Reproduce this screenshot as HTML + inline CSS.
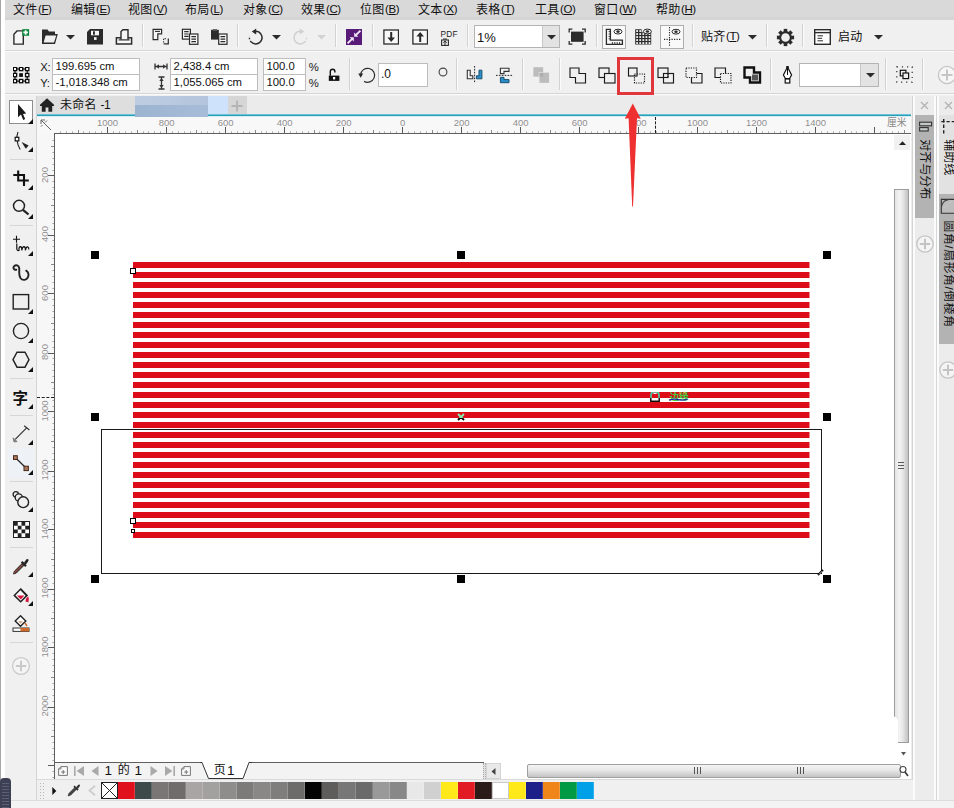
<!DOCTYPE html>
<html><head><meta charset="utf-8"><title>CorelDRAW</title>
<style>
html,body{margin:0;padding:0;}
body{width:954px;height:808px;overflow:hidden;background:#f0f0f0;font-family:"Liberation Sans","Noto Sans CJK SC",sans-serif;}
#r{position:relative;width:954px;height:808px;overflow:hidden;}
#r div,#r span,#r svg{position:absolute;display:block;}
#r span{white-space:nowrap;line-height:1;}
#r div{box-sizing:border-box;}
#r span.cj{font-family:"Liberation Sans","Noto Sans CJK SC",sans-serif;}
</style></head><body><div id="r">
<div style="left:0px;top:0px;width:954px;height:808px;background:#f0f0f0;"></div>
<div style="left:0px;top:0px;width:954px;height:20px;background:#d9d9d9;"></div>
<div style="left:0px;top:17px;width:954px;height:3px;background:#d4d4d4;"></div>
<span class="cj" style="left:13px;top:4px;font-size:12px;color:#111;letter-spacing:0.3px">文件</span>
<span style="left:38.0px;top:4px;font-size:11.5px;color:#111;letter-spacing:-0.4px">(<u>F</u>)</span>
<span class="cj" style="left:71px;top:4px;font-size:12px;color:#111;letter-spacing:0.3px">编辑</span>
<span style="left:96.0px;top:4px;font-size:11.5px;color:#111;letter-spacing:-0.4px">(<u>E</u>)</span>
<span class="cj" style="left:128px;top:4px;font-size:12px;color:#111;letter-spacing:0.3px">视图</span>
<span style="left:153.0px;top:4px;font-size:11.5px;color:#111;letter-spacing:-0.4px">(<u>V</u>)</span>
<span class="cj" style="left:185px;top:4px;font-size:12px;color:#111;letter-spacing:0.3px">布局</span>
<span style="left:210.0px;top:4px;font-size:11.5px;color:#111;letter-spacing:-0.4px">(<u>L</u>)</span>
<span class="cj" style="left:243px;top:4px;font-size:12px;color:#111;letter-spacing:0.3px">对象</span>
<span style="left:268.0px;top:4px;font-size:11.5px;color:#111;letter-spacing:-0.4px">(<u>C</u>)</span>
<span class="cj" style="left:301px;top:4px;font-size:12px;color:#111;letter-spacing:0.3px">效果</span>
<span style="left:326.0px;top:4px;font-size:11.5px;color:#111;letter-spacing:-0.4px">(<u>C</u>)</span>
<span class="cj" style="left:360px;top:4px;font-size:12px;color:#111;letter-spacing:0.3px">位图</span>
<span style="left:385.0px;top:4px;font-size:11.5px;color:#111;letter-spacing:-0.4px">(<u>B</u>)</span>
<span class="cj" style="left:418px;top:4px;font-size:12px;color:#111;letter-spacing:0.3px">文本</span>
<span style="left:443.0px;top:4px;font-size:11.5px;color:#111;letter-spacing:-0.4px">(<u>X</u>)</span>
<span class="cj" style="left:476px;top:4px;font-size:12px;color:#111;letter-spacing:0.3px">表格</span>
<span style="left:501.0px;top:4px;font-size:11.5px;color:#111;letter-spacing:-0.4px">(<u>T</u>)</span>
<span class="cj" style="left:535px;top:4px;font-size:12px;color:#111;letter-spacing:0.3px">工具</span>
<span style="left:560.0px;top:4px;font-size:11.5px;color:#111;letter-spacing:-0.4px">(<u>O</u>)</span>
<span class="cj" style="left:594px;top:4px;font-size:12px;color:#111;letter-spacing:0.3px">窗口</span>
<span style="left:619.0px;top:4px;font-size:11.5px;color:#111;letter-spacing:-0.4px">(<u>W</u>)</span>
<span class="cj" style="left:656px;top:4px;font-size:12px;color:#111;letter-spacing:0.3px">帮助</span>
<span style="left:681.0px;top:4px;font-size:11.5px;color:#111;letter-spacing:-0.4px">(<u>H</u>)</span>
<div style="left:5px;top:50px;width:949px;height:1px;background:#d6d6d6;"></div>
<div style="left:5px;top:51px;width:949px;height:1px;background:#fafafa;"></div>
<div style="left:5px;top:93px;width:949px;height:1px;background:#d6d6d6;"></div>
<div style="left:5px;top:94px;width:949px;height:1px;background:#fafafa;"></div>
<svg style="left:12px;top:28px;" width="19" height="18" viewBox="0 0 19 18"><path d="M5 2.9 H11.3 V16.1 H1.9 V6.2 Z" fill="#f7f7f7" stroke="#2b2b2b" stroke-width="1.4" stroke-linejoin="miter"/><rect x="10.2" y="1.1" width="6.9" height="6.7" fill="#10893e"/><path d="M13.65 2.2 V6.7 M11.4 4.45 H15.9" stroke="#fff" stroke-width="1.7"/></svg>
<svg style="left:41px;top:28px;" width="18" height="17" viewBox="0 0 18 17"><path d="M1 1.5 H6.5 L8 3.5 H14 V6 H16.8 L14 16 H1 Z" fill="#2b2b2b"/><path d="M4.6 7.5 H15.2 L13 14.6 H2.6 Z" fill="#f0f0f0"/></svg>
<svg style="left:66px;top:34.5px;" width="9" height="5" viewBox="0 0 9 5"><path d="M0 0 H9 L4.5 4.6 Z" fill="#2b2b2b"/></svg>
<svg style="left:87px;top:29px;" width="16" height="16" viewBox="0 0 16 16"><path d="M3 0 H16 V15.6 H0 V3 Z" fill="#2b2b2b"/><rect x="4" y="1.8" width="8" height="4.5" fill="#f6f6f6"/><rect x="6" y="2.3" width="1.9" height="3.4" fill="#2b2b2b"/><rect x="7" y="8.2" width="2.6" height="2.7" fill="#f6f6f6"/></svg>
<svg style="left:115px;top:29px;" width="18" height="16" viewBox="0 0 18 16"><rect x="1.4" y="8.8" width="15.2" height="6.2" fill="#f8f8f8" stroke="#2b2b2b" stroke-width="1.5"/><path d="M6 10.6 V2.6 L8 0.7 H13 V10.6" fill="#f6f6f6" stroke="#2b2b2b" stroke-width="1.4"/><path d="M3.6 10.9 H14.6" stroke="#2b2b2b" stroke-width="1.2"/></svg>
<div style="left:142px;top:24px;width:1px;height:23px;background:#d2d2d2;"></div>
<div style="left:143px;top:24px;width:1px;height:23px;background:#fbfbfb;"></div>
<svg style="left:152px;top:28px;" width="18" height="18" viewBox="0 0 18 18"><path d="M1.1 1.3 H9.6 V5.9 H5.8 V11.6 H1.1 Z" fill="#f7f7f7" stroke="#2b2b2b" stroke-width="1.2"/><path d="M3 3.4 H8" stroke="#2b2b2b" stroke-width="1.1"/><path d="M16.3 10.6 V15.9 H11.6" fill="none" stroke="#2b2b2b" stroke-width="1.2"/><path d="M11.6 14.4 V10.6 H15" fill="none" stroke="#2b2b2b" stroke-width="1.1" stroke-dasharray="1.2 1.2"/></svg>
<svg style="left:181px;top:28px;" width="18" height="18" viewBox="0 0 18 18"><rect x="1.4" y="1.3" width="8" height="9.8" fill="#f7f7f7" stroke="#2b2b2b" stroke-width="1.2"/><path d="M3.2 3.6 H7.6 M3.2 6 H7.6 M3.2 8.4 H7.6" stroke="#2b2b2b" stroke-width="1.1"/><rect x="8.5" y="6" width="8.4" height="10.3" fill="#f7f7f7" stroke="#2b2b2b" stroke-width="1.2"/><path d="M10.4 8.6 H15 M10.4 11.1 H15 M10.4 13.6 H15" stroke="#2b2b2b" stroke-width="1.1"/></svg>
<svg style="left:210px;top:28px;" width="19" height="18" viewBox="0 0 19 18"><rect x="1" y="1.8" width="7.8" height="9.8" fill="#2b2b2b"/><rect x="2.8" y="1" width="4.2" height="1.7" fill="#6a6a6a"/><rect x="8.7" y="6" width="8.3" height="10.3" fill="#f7f7f7" stroke="#2b2b2b" stroke-width="1.2"/><path d="M10.5 8.6 H15.2 M10.5 11.1 H15.2 M10.5 13.6 H15.2" stroke="#2b2b2b" stroke-width="1.1"/></svg>
<div style="left:237px;top:24px;width:1px;height:23px;background:#d2d2d2;"></div>
<div style="left:238px;top:24px;width:1px;height:23px;background:#fbfbfb;"></div>
<svg style="left:247px;top:28px;" width="17" height="18" viewBox="0 0 17 18"><path d="M8.7 3.3 A6.3 6.3 0 1 1 4.25 14.05" fill="none" stroke="#2b2b2b" stroke-width="1.5"/><path d="M4.25 14.05 A6.3 6.3 0 0 1 2.6 8" fill="none" stroke="#2b2b2b" stroke-width="1.4" stroke-dasharray="1.5 1.7"/><path d="M9.2 0.5 L4.8 3.6 L9.2 6.6 Z" fill="#2b2b2b"/></svg>
<svg style="left:272px;top:34.5px;" width="9" height="5" viewBox="0 0 9 5"><path d="M0 0 H9 L4.5 4.6 Z" fill="#2b2b2b"/></svg>
<svg style="left:292px;top:28px;" width="17" height="18" viewBox="0 0 17 18"><path d="M8.3 3.3 A6.3 6.3 0 1 0 12.75 14.05" fill="none" stroke="#d0d0d0" stroke-width="1.5"/><path d="M12.75 14.05 A6.3 6.3 0 0 0 14.4 8" fill="none" stroke="#d0d0d0" stroke-width="1.4" stroke-dasharray="1.5 1.7"/><path d="M7.8 0.5 L12.2 3.6 L7.8 6.6 Z" fill="#d0d0d0"/></svg>
<svg style="left:317px;top:34.5px;" width="9" height="5" viewBox="0 0 9 5"><path d="M0 0 H9 L4.5 4.6 Z" fill="#d2d2d2"/></svg>
<div style="left:335px;top:24px;width:1px;height:23px;background:#d2d2d2;"></div>
<div style="left:336px;top:24px;width:1px;height:23px;background:#fbfbfb;"></div>
<svg style="left:346px;top:29px;" width="16" height="16" viewBox="0 0 16 16"><rect width="16" height="16" fill="#581c78"/><path d="M14.4 1.6 L9.6 6.4" stroke="#efe6f6" stroke-width="2"/><path d="M8.2 3.6 V7.8 H12.4 Z" fill="#efe6f6"/><path d="M1.6 14.4 L6.4 9.6" stroke="#efe6f6" stroke-width="2"/><path d="M7.8 12.4 V8.2 H3.6 Z" fill="#efe6f6"/></svg>
<div style="left:372px;top:24px;width:1px;height:23px;background:#d2d2d2;"></div>
<div style="left:373px;top:24px;width:1px;height:23px;background:#fbfbfb;"></div>
<svg style="left:383px;top:29px;" width="16" height="16" viewBox="0 0 16 16"><rect x="0.9" y="1" width="14.6" height="14" fill="#f8f8f8" stroke="#2b2b2b" stroke-width="1.3"/><path d="M8.2 3 V10" stroke="#2b2b2b" stroke-width="2"/><path d="M4.4 8.4 L8.2 13 L12 8.4 Z" fill="#2b2b2b"/></svg>
<svg style="left:412px;top:29px;" width="16" height="16" viewBox="0 0 16 16"><rect x="0.9" y="1" width="14.6" height="14" fill="#f8f8f8" stroke="#2b2b2b" stroke-width="1.3"/><path d="M8.2 13 V6" stroke="#2b2b2b" stroke-width="2"/><path d="M4.4 7.6 L8.2 3 L12 7.6 Z" fill="#2b2b2b"/></svg>
<span style="left:440.5px;top:29.5px;font-size:8.3px;color:#222;letter-spacing:0.2px">PDF</span>
<svg style="left:441px;top:38px;" width="8" height="8" viewBox="0 0 8 8"><rect x="0.6" y="2" width="6.8" height="5.4" fill="none" stroke="#2b2b2b" stroke-width="1.1"/><path d="M4 7 V3 M2.3 4.8 L4 3 L5.7 4.8" stroke="#2b2b2b" stroke-width="1" fill="none"/><path d="M2 1 H6" stroke="#2b2b2b" stroke-width="1"/></svg>
<div style="left:467px;top:24px;width:1px;height:23px;background:#d2d2d2;"></div>
<div style="left:468px;top:24px;width:1px;height:23px;background:#fbfbfb;"></div>
<div style="left:474px;top:25px;width:86px;height:23px;background:#fff;border:1px solid #b4b4b4;"></div>
<div style="left:542px;top:26px;width:17px;height:21px;background:#e3e3e3;border-left:1px solid #c8c8c8;"></div>
<span style="left:477px;top:30.5px;font-size:13px;color:#111;">1%</span>
<svg style="left:546.5px;top:35px;" width="9" height="5" viewBox="0 0 9 5"><path d="M0 0 H9 L4.5 4.6 Z" fill="#2b2b2b"/></svg>
<svg style="left:568px;top:28px;" width="19" height="18" viewBox="0 0 19 18"><rect x="3" y="3.6" width="12.6" height="10.2" fill="#2b2b2b"/><path d="M1.2 4.4 V1.2 H4.4 M14 1.2 H17.2 V4.4 M17.2 13 V16.2 H14 M4.4 16.2 H1.2 V13" fill="none" stroke="#2b2b2b" stroke-width="1.3"/></svg>
<div style="left:596px;top:24px;width:1px;height:23px;background:#d2d2d2;"></div>
<div style="left:597px;top:24px;width:1px;height:23px;background:#fbfbfb;"></div>
<div style="left:602px;top:25px;width:24px;height:24px;background:#f9f9f9;border:1px solid #adadad;"></div>
<svg style="left:605px;top:28px;" width="19" height="18" viewBox="0 0 19 18"><path d="M1.4 1.4 H5.4 V12.2 H17.4 V16.3 H1.4 Z" fill="#f9f9f9" stroke="#2b2b2b" stroke-width="1.3"/><path d="M3.6 3.6 H5 M3.6 6 H5 M3.6 8.4 H5 M3.6 10.8 H5 M7.4 14 V16 M9.8 14 V16 M12.2 14 V16 M14.6 14 V16" stroke="#2b2b2b" stroke-width="0.9"/><ellipse cx="13" cy="3.6" rx="4" ry="2.4" fill="#f9f9f9" stroke="#2b2b2b" stroke-width="1"/><ellipse cx="13" cy="3.6" rx="1.7" ry="1.3" fill="#2b2b2b"/></svg>
<svg style="left:634px;top:28px;" width="19" height="18" viewBox="0 0 19 18"><path d="M1.2 1.2 H7.6 V4.2 H17.2 V16.4 H1.2 Z" fill="#2b2b2b"/><rect x="2.2" y="2.2" width="1.8" height="1.7" fill="#fff"/><rect x="5.3" y="2.2" width="1.8" height="1.7" fill="#fff"/><rect x="2.2" y="5.2" width="1.8" height="1.7" fill="#fff"/><rect x="5.3" y="5.2" width="1.8" height="1.7" fill="#fff"/><rect x="8.4" y="5.2" width="1.8" height="1.7" fill="#fff"/><rect x="11.5" y="5.2" width="1.8" height="1.7" fill="#fff"/><rect x="14.6" y="5.2" width="1.8" height="1.7" fill="#fff"/><rect x="2.2" y="8.2" width="1.8" height="1.7" fill="#fff"/><rect x="5.3" y="8.2" width="1.8" height="1.7" fill="#fff"/><rect x="8.4" y="8.2" width="1.8" height="1.7" fill="#fff"/><rect x="11.5" y="8.2" width="1.8" height="1.7" fill="#fff"/><rect x="14.6" y="8.2" width="1.8" height="1.7" fill="#fff"/><rect x="2.2" y="11.2" width="1.8" height="1.7" fill="#fff"/><rect x="5.3" y="11.2" width="1.8" height="1.7" fill="#fff"/><rect x="8.4" y="11.2" width="1.8" height="1.7" fill="#fff"/><rect x="11.5" y="11.2" width="1.8" height="1.7" fill="#fff"/><rect x="14.6" y="11.2" width="1.8" height="1.7" fill="#fff"/><rect x="2.2" y="14.2" width="1.8" height="1.7" fill="#fff"/><rect x="5.3" y="14.2" width="1.8" height="1.7" fill="#fff"/><rect x="8.4" y="14.2" width="1.8" height="1.7" fill="#fff"/><rect x="11.5" y="14.2" width="1.8" height="1.7" fill="#fff"/><rect x="14.6" y="14.2" width="1.8" height="1.7" fill="#fff"/><ellipse cx="13.4" cy="3.5" rx="4" ry="2.4" fill="#f0f0f0" stroke="#2b2b2b" stroke-width="1"/><ellipse cx="13.4" cy="3.5" rx="1.7" ry="1.3" fill="#2b2b2b"/></svg>
<div style="left:660px;top:25px;width:24px;height:24px;background:#f9f9f9;border:1px solid #adadad;"></div>
<svg style="left:663px;top:26px;" width="19" height="21" viewBox="0 0 19 21"><path d="M6.5 1 V21" stroke="#2b2b2b" stroke-width="1.1" stroke-dasharray="1.2 1.3"/><path d="M1 13.4 H17.5" stroke="#2b2b2b" stroke-width="1.1" stroke-dasharray="1.2 1.3"/><ellipse cx="13" cy="5.7" rx="4" ry="2.4" fill="#f9f9f9" stroke="#2b2b2b" stroke-width="1"/><ellipse cx="13" cy="5.7" rx="1.7" ry="1.3" fill="#2b2b2b"/></svg>
<div style="left:692px;top:24px;width:1px;height:23px;background:#d2d2d2;"></div>
<div style="left:693px;top:24px;width:1px;height:23px;background:#fbfbfb;"></div>
<span class="cj" style="left:701px;top:31px;font-size:12px;color:#111;letter-spacing:0.3px">贴齐</span>
<span style="left:726.0px;top:31px;font-size:11.5px;color:#111;letter-spacing:-0.4px">(<u>T</u>)</span>
<svg style="left:748px;top:35px;" width="9" height="5" viewBox="0 0 9 5"><path d="M0 0 H9 L4.5 4.6 Z" fill="#2b2b2b"/></svg>
<div style="left:766px;top:24px;width:1px;height:23px;background:#d2d2d2;"></div>
<div style="left:767px;top:24px;width:1px;height:23px;background:#fbfbfb;"></div>
<svg style="left:776px;top:28px;" width="19" height="19" viewBox="0 0 19 19"><g transform="translate(9.5 9.5)"><g fill="#2b2b2b"><rect x="-1.8" y="-8.6" width="3.6" height="4" transform="rotate(0)"/><rect x="-1.8" y="-8.6" width="3.6" height="4" transform="rotate(45)"/><rect x="-1.8" y="-8.6" width="3.6" height="4" transform="rotate(90)"/><rect x="-1.8" y="-8.6" width="3.6" height="4" transform="rotate(135)"/><rect x="-1.8" y="-8.6" width="3.6" height="4" transform="rotate(180)"/><rect x="-1.8" y="-8.6" width="3.6" height="4" transform="rotate(225)"/><rect x="-1.8" y="-8.6" width="3.6" height="4" transform="rotate(270)"/><rect x="-1.8" y="-8.6" width="3.6" height="4" transform="rotate(315)"/></g><circle r="6.4" fill="#2b2b2b"/><circle r="4.3" fill="#f0f0f0"/></g></svg>
<div style="left:802px;top:24px;width:1px;height:23px;background:#d2d2d2;"></div>
<div style="left:803px;top:24px;width:1px;height:23px;background:#fbfbfb;"></div>
<svg style="left:814px;top:29px;" width="17" height="16" viewBox="0 0 17 16"><rect x="0.7" y="0.7" width="15.6" height="14.6" fill="#fff" stroke="#2b2b2b" stroke-width="1.4"/><path d="M1 3.6 H16" stroke="#2b2b2b" stroke-width="1.4"/><path d="M3.5 6.8 H9 M3.5 9.3 H8 M3.5 11.8 H9" stroke="#2b2b2b" stroke-width="1"/></svg>
<span class="cj" style="left:838px;top:31px;font-size:12px;color:#111;letter-spacing:0.3px">启动</span>
<svg style="left:874px;top:35px;" width="9" height="5" viewBox="0 0 9 5"><path d="M0 0 H9 L4.5 4.6 Z" fill="#2b2b2b"/></svg>
<svg style="left:13px;top:67px;" width="17" height="17" viewBox="0 0 17 17"><rect x="2" y="2" width="12.2" height="12.1" fill="none" stroke="#0a0a0a" stroke-width="1.2"/><rect x="0.35" y="0.35" width="3.3" height="3.3" fill="#fff" stroke="#0a0a0a" stroke-width="1.3"/><rect x="0.35" y="6.40" width="3.3" height="3.3" fill="#fff" stroke="#0a0a0a" stroke-width="1.3"/><rect x="0.35" y="12.45" width="3.3" height="3.3" fill="#fff" stroke="#0a0a0a" stroke-width="1.3"/><rect x="6.45" y="0.35" width="3.3" height="3.3" fill="#fff" stroke="#0a0a0a" stroke-width="1.3"/><rect x="6.45" y="12.45" width="3.3" height="3.3" fill="#fff" stroke="#0a0a0a" stroke-width="1.3"/><rect x="12.55" y="0.35" width="3.3" height="3.3" fill="#fff" stroke="#0a0a0a" stroke-width="1.3"/><rect x="12.55" y="6.40" width="3.3" height="3.3" fill="#fff" stroke="#0a0a0a" stroke-width="1.3"/><rect x="12.55" y="12.45" width="3.3" height="3.3" fill="#fff" stroke="#0a0a0a" stroke-width="1.3"/><rect x="6.2" y="6.2" width="3.7" height="3.7" fill="#0a0a0a"/></svg>
<span style="left:40.3px;top:61.6px;font-size:11.3px;color:#222;letter-spacing:-0.4px">X:</span>
<span style="left:40.3px;top:77.6px;font-size:11.3px;color:#222;letter-spacing:-0.4px">Y:</span>
<div style="left:52px;top:58px;width:88px;height:17px;background:#fff;border:1px solid #bdbdbd;"></div>
<span style="left:55.5px;top:61.2px;font-size:11.3px;color:#111;">199.695 cm</span>
<div style="left:52px;top:74px;width:88px;height:17px;background:#fff;border:1px solid #bdbdbd;"></div>
<span style="left:55.5px;top:77.2px;font-size:11.3px;color:#111;">-1,018.348 cm</span>
<svg style="left:154px;top:63px;" width="14" height="7" viewBox="0 0 14 7"><path d="M1 0.5 V6.5 M13 0.5 V6.5 M1 3.5 H13" stroke="#333" stroke-width="1.3"/><path d="M2 3.5 L5 1.3 V5.7 Z M12 3.5 L9 1.3 V5.7 Z" fill="#333"/></svg>
<svg style="left:158px;top:76px;" width="7" height="14" viewBox="0 0 7 14"><path d="M0.5 1 H6.5 M0.5 13 H6.5 M3.5 1 V13" stroke="#333" stroke-width="1.3"/><path d="M3.5 2 L1.3 5 H5.7 Z M3.5 12 L1.3 9 H5.7 Z" fill="#333"/></svg>
<div style="left:170px;top:58px;width:88px;height:17px;background:#fff;border:1px solid #bdbdbd;"></div>
<span style="left:173.5px;top:61.2px;font-size:11.3px;color:#111;">2,438.4 cm</span>
<div style="left:170px;top:74px;width:88px;height:17px;background:#fff;border:1px solid #bdbdbd;"></div>
<span style="left:173.5px;top:77.2px;font-size:11.3px;color:#111;">1,055.065 cm</span>
<div style="left:263px;top:58px;width:43px;height:17px;background:#fff;border:1px solid #bdbdbd;"></div>
<span style="left:266.5px;top:61.2px;font-size:11.3px;color:#111;">100.0</span>
<div style="left:263px;top:74px;width:43px;height:17px;background:#fff;border:1px solid #bdbdbd;"></div>
<span style="left:266.5px;top:77.2px;font-size:11.3px;color:#111;">100.0</span>
<span style="left:308.8px;top:61.6px;font-size:11.3px;color:#222;">%</span>
<span style="left:308.8px;top:77.6px;font-size:11.3px;color:#222;">%</span>
<svg style="left:328px;top:67px;" width="12" height="15" viewBox="0 0 12 15"><path d="M2.3 8.8 V4.6 A2.3 2.3 0 0 1 6.9 4.6 V5.4" fill="none" stroke="#111" stroke-width="1.4"/><rect x="0.8" y="8.6" width="10.6" height="5.3" fill="#111"/><rect x="5" y="10" width="2.2" height="2.4" fill="#fff"/></svg>
<div style="left:349px;top:58px;width:1px;height:32px;background:#d2d2d2;"></div>
<div style="left:350px;top:58px;width:1px;height:32px;background:#fbfbfb;"></div>
<svg style="left:359px;top:67px;overflow:visible" width="18" height="18" viewBox="0 0 18 18"><path d="M5.1 14.36 A7 7 0 1 0 1.63 7.7" fill="none" stroke="#2b2b2b" stroke-width="1.2"/><path d="M-0.8 6.6 H4.2 L1.7 10.8 Z" fill="#2b2b2b"/></svg>
<div style="left:378px;top:63px;width:50px;height:24px;background:#fff;border:1px solid #bdbdbd;"></div>
<span style="left:381px;top:68px;font-size:12px;color:#111;">.0</span>
<svg style="left:438px;top:67px;" width="10" height="10" viewBox="0 0 10 10"><circle cx="5" cy="5" r="3.9" fill="none" stroke="#444" stroke-width="1.1"/></svg>
<div style="left:456px;top:58px;width:1px;height:32px;background:#d2d2d2;"></div>
<div style="left:457px;top:58px;width:1px;height:32px;background:#fbfbfb;"></div>
<svg style="left:466px;top:66px;" width="18" height="18" viewBox="0 0 18 18"><path d="M1.3 4.2 H4.2 V9.8 H6.8 V12.8 H1.3 Z" fill="#f6f6f6" stroke="#333" stroke-width="1.1"/><path d="M8.6 0 V17" stroke="#222" stroke-width="1" stroke-dasharray="1.6 1.3"/><path d="M15.9 4.2 H13 V9.8 H10.4 V12.8 H15.9 Z" fill="#2a8fc8" stroke="#1c4f70" stroke-width="1"/></svg>
<svg style="left:496px;top:66px;" width="17" height="18" viewBox="0 0 17 18"><path d="M4.4 2.3 H13 V5.4 H8 V7.6 H4.4 Z" fill="#f6f6f6" stroke="#333" stroke-width="1.1"/><path d="M0 9.4 H16.5" stroke="#222" stroke-width="1" stroke-dasharray="1.6 1.3"/><path d="M4.4 16.7 H13 V13.6 H8 V11.3 H4.4 Z" fill="#2a8fc8" stroke="#1c4f70" stroke-width="1"/></svg>
<div style="left:522px;top:58px;width:1px;height:32px;background:#d2d2d2;"></div>
<div style="left:523px;top:58px;width:1px;height:32px;background:#fbfbfb;"></div>
<svg style="left:533px;top:67px;" width="17" height="17" viewBox="0 0 17 17"><rect x="0.4" y="0.2" width="9.8" height="9.4" fill="#bcbcbc"/><rect x="5.8" y="5" width="10.6" height="11" fill="#e4e4e4"/><rect x="6.6" y="5.8" width="9.4" height="10" fill="#bcbcbc"/><rect x="6.6" y="5.8" width="3.6" height="3.8" fill="#adadad"/></svg>
<div style="left:559px;top:58px;width:1px;height:32px;background:#d2d2d2;"></div>
<div style="left:560px;top:58px;width:1px;height:32px;background:#fbfbfb;"></div>
<svg style="left:569px;top:66.5px;" width="18" height="17" viewBox="0 0 18 17"><path d="M1 1 H10 V6.5 H16.5 V16 H6.5 V10.5 H1 Z" stroke="#1a1a1a" stroke-width="1.15" fill="none"/></svg>
<svg style="left:598px;top:66.5px;" width="18" height="17" viewBox="0 0 18 17"><rect x="1" y="1" width="10" height="9.5" stroke="#1a1a1a" stroke-width="1.15" fill="none"/><rect x="6.5" y="6.5" width="10.5" height="9.5" fill="#f0f0f0" stroke="#1a1a1a" stroke-width="1.15"/></svg>
<div style="left:617px;top:57px;width:37px;height:38px;background:transparent;border:3px solid #e0363c;"></div>
<svg style="left:627px;top:66.5px;" width="19" height="17" viewBox="0 0 19 17"><rect x="1.5" y="1" width="8.5" height="8" stroke="#1a1a1a" stroke-width="1.15" fill="none"/><rect x="7.5" y="7" width="10" height="9" stroke="#1a1a1a" stroke-width="1.15" fill="none" stroke-dasharray="1.2 1.2"/></svg>
<svg style="left:657px;top:66.5px;" width="18" height="17" viewBox="0 0 18 17"><rect x="1" y="1" width="10" height="9.5" stroke="#1a1a1a" stroke-width="1.15" fill="none"/><rect x="6.5" y="6.5" width="10" height="9.5" stroke="#1a1a1a" stroke-width="1.15" fill="none"/><path d="M6.5 10.5 H11 V6.5" stroke="#1a1a1a" stroke-width="1.15" fill="none" stroke-dasharray="1.2 1.2"/></svg>
<svg style="left:685px;top:66.5px;" width="18" height="17" viewBox="0 0 18 17"><rect x="1" y="1" width="10.5" height="9.5" stroke="#1a1a1a" stroke-width="1.15" fill="none" stroke-dasharray="1.2 1.2"/><path d="M11.5 6.5 H17 V16 H6.5 V10.5" stroke="#1a1a1a" stroke-width="1.15" fill="none"/></svg>
<svg style="left:714px;top:66.5px;" width="18" height="17" viewBox="0 0 18 17"><path d="M6.5 10.5 H1 V1 H11.5 V6.5" stroke="#1a1a1a" stroke-width="1.15" fill="none"/><rect x="6.5" y="6.5" width="10.5" height="9.5" stroke="#1a1a1a" stroke-width="1.15" fill="none" stroke-dasharray="1.2 1.2"/></svg>
<svg style="left:743px;top:66px;" width="19" height="18" viewBox="0 0 19 18"><path d="M1.5 1.5 H11 V6.5 H17 V16.5 H7 V11.5 H1.5 Z" fill="#f0f0f0" stroke="#111" stroke-width="2.4"/><rect x="9" y="8.5" width="6" height="6" fill="#555"/></svg>
<div style="left:770px;top:58px;width:1px;height:32px;background:#d2d2d2;"></div>
<div style="left:771px;top:58px;width:1px;height:32px;background:#fbfbfb;"></div>
<svg style="left:782px;top:66px;" width="11" height="18" viewBox="0 0 11 18"><path d="M5.5 1 L9.6 9 L7.6 12.5 H3.4 L1.4 9 Z" fill="#fff" stroke="#111" stroke-width="1.2"/><path d="M5.5 2 V9" stroke="#111" stroke-width="1"/><rect x="3.2" y="13" width="4.6" height="4" fill="#fff" stroke="#111" stroke-width="1.2"/><rect x="4.3" y="0" width="2.4" height="2" fill="#111"/></svg>
<div style="left:799px;top:63px;width:80px;height:24px;background:#fff;border:1px solid #b4b4b4;"></div>
<div style="left:860px;top:64px;width:18px;height:22px;background:#e3e3e3;border-left:1px solid #c8c8c8;"></div>
<svg style="left:865.5px;top:73px;" width="9" height="5" viewBox="0 0 9 5"><path d="M0 0 H9 L4.5 4.6 Z" fill="#2b2b2b"/></svg>
<div style="left:885px;top:58px;width:1px;height:32px;background:#d2d2d2;"></div>
<div style="left:886px;top:58px;width:1px;height:32px;background:#fbfbfb;"></div>
<svg style="left:896px;top:66px;" width="17" height="17" viewBox="0 0 17 17"><rect x="0.8" y="0.8" width="15.4" height="15.4" fill="none" stroke="#333" stroke-width="1.2" stroke-dasharray="1.2 3.9"/><rect x="4.3" y="4.3" width="5.6" height="5.6" fill="#f0f0f0" stroke="#111" stroke-width="1.2"/><rect x="7" y="7" width="5.6" height="5.6" fill="#f0f0f0" stroke="#111" stroke-width="1.2"/></svg>
<div style="left:922px;top:58px;width:1px;height:32px;background:#d2d2d2;"></div>
<div style="left:923px;top:58px;width:1px;height:32px;background:#fbfbfb;"></div>
<svg style="left:937px;top:65px;" width="20" height="20" viewBox="0 0 20 20"><circle cx="10" cy="10" r="8.6" fill="#f6f6f6" stroke="#c6c6c6" stroke-width="1.3"/><path d="M10 4.5 V15.5 M4.5 10 H15.5" stroke="#c6c6c6" stroke-width="2"/></svg>
<div style="left:9px;top:100px;width:24px;height:24px;background:#fefefe;border:1px solid #8e8e8e;"></div>
<svg style="left:16px;top:103px;" width="12" height="18" viewBox="0 0 12 18"><path d="M2 1 V14.2 L5 11.6 L7.2 17 L9.2 16.1 L7 10.9 L10.2 10.6 Z" fill="#1a1a1a"/></svg>
<svg style="left:28px;top:118.5px;" width="5" height="5" viewBox="0 0 5 5"><path d="M5 0 V5 H0 Z" fill="#111"/></svg>
<svg style="left:12px;top:131px;" width="20" height="20" viewBox="0 0 20 20"><path d="M6 1 C4 6 4.5 12 8.2 18.5" fill="none" stroke="#222" stroke-width="1.1"/><rect x="3.2" y="6.3" width="3.6" height="3.6" fill="#fff" stroke="#111" stroke-width="1.2"/><path d="M9.6 11 L16.6 14.4 L13.8 17.8 Z" fill="#222"/></svg>
<svg style="left:28px;top:147px;" width="5" height="5" viewBox="0 0 5 5"><path d="M5 0 V5 H0 Z" fill="#111"/></svg>
<div style="left:10px;top:159px;width:23px;height:1px;background:#d6d6d6;"></div>
<svg style="left:12px;top:169px;" width="20" height="19" viewBox="0 0 20 19"><path d="M6.2 1.5 V11.5 H16.8 M1.3 6 H12 V17" fill="none" stroke="#111" stroke-width="2.1"/></svg>
<svg style="left:28px;top:184.5px;" width="5" height="5" viewBox="0 0 5 5"><path d="M5 0 V5 H0 Z" fill="#111"/></svg>
<svg style="left:12px;top:198px;" width="20" height="20" viewBox="0 0 20 20"><circle cx="7" cy="7.8" r="5.5" fill="none" stroke="#222" stroke-width="1.5"/><path d="M11 11.8 L16.5 16.5" stroke="#222" stroke-width="2.3"/></svg>
<svg style="left:28px;top:214px;" width="5" height="5" viewBox="0 0 5 5"><path d="M5 0 V5 H0 Z" fill="#111"/></svg>
<div style="left:10px;top:225px;width:23px;height:1px;background:#d6d6d6;"></div>
<svg style="left:12px;top:235px;" width="20" height="19" viewBox="0 0 20 19"><path d="M4.5 0.8 V7.8 M1 4.3 H8" stroke="#111" stroke-width="1.1"/><path d="M4.8 8.6 V14 Q5.1 16 7 15.5 Q6.6 11.4 8.6 11.6 Q10 12 9.8 15.4 Q10.4 11.4 12.2 11.6 Q13.6 12 13.4 15.4 Q14 11.6 15.6 11.8 Q17 12.4 16.8 14.5" fill="none" stroke="#111" stroke-width="1.2"/></svg>
<svg style="left:28px;top:250.5px;" width="5" height="5" viewBox="0 0 5 5"><path d="M5 0 V5 H0 Z" fill="#111"/></svg>
<svg style="left:12px;top:263px;" width="20" height="19" viewBox="0 0 20 19"><path d="M4.3 6.7 C2 7.2 0.6 4.8 2.2 3.2 C3.9 1.5 6.8 2.2 7.2 5.2 C7.6 8.4 6.4 12 8.4 15 C10.4 17.8 14.8 17.6 16.1 13.8 C17 11 15.8 8.6 14.2 7.7" fill="none" stroke="#222" stroke-width="1.9" stroke-linecap="round"/></svg>
<svg style="left:12px;top:293px;" width="18" height="18" viewBox="0 0 18 18"><rect x="1.2" y="1.6" width="15.4" height="14.4" fill="none" stroke="#222" stroke-width="1.4"/></svg>
<svg style="left:28px;top:309px;" width="5" height="5" viewBox="0 0 5 5"><path d="M5 0 V5 H0 Z" fill="#111"/></svg>
<svg style="left:12px;top:322px;" width="18" height="18" viewBox="0 0 18 18"><circle cx="9" cy="9" r="7.6" fill="none" stroke="#222" stroke-width="1.4"/></svg>
<svg style="left:28px;top:338px;" width="5" height="5" viewBox="0 0 5 5"><path d="M5 0 V5 H0 Z" fill="#111"/></svg>
<svg style="left:12px;top:351px;" width="18" height="18" viewBox="0 0 18 18"><path d="M1 8.7 L5 1.2 H13 L17 8.7 L13 16.2 H5 Z" fill="none" stroke="#222" stroke-width="1.4"/></svg>
<svg style="left:28px;top:367px;" width="5" height="5" viewBox="0 0 5 5"><path d="M5 0 V5 H0 Z" fill="#111"/></svg>
<div style="left:10px;top:378px;width:23px;height:1px;background:#d6d6d6;"></div>
<span class="cj" style="left:12.5px;top:391px;font-size:15.5px;font-weight:bold;color:#111;">字</span>
<svg style="left:28px;top:403.5px;" width="5" height="5" viewBox="0 0 5 5"><path d="M5 0 V5 H0 Z" fill="#111"/></svg>
<div style="left:10px;top:415px;width:23px;height:1px;background:#d6d6d6;"></div>
<svg style="left:12px;top:424px;" width="20" height="20" viewBox="0 0 20 20"><path d="M3.2 15.4 L14.6 3.8" stroke="#333" stroke-width="1.2"/><path d="M12.2 1.8 L17.4 6" stroke="#333" stroke-width="1.2"/><path d="M1 13.8 L5.2 17.6 L2 18 Z" fill="#7a7a7a" stroke="#7a7a7a" stroke-width="0.8"/></svg>
<svg style="left:28px;top:440px;" width="5" height="5" viewBox="0 0 5 5"><path d="M5 0 V5 H0 Z" fill="#111"/></svg>
<div style="left:8px;top:448px;width:26px;height:30px;background:#edf3fa;opacity:.6"></div>
<svg style="left:12px;top:454px;" width="19" height="18" viewBox="0 0 19 18"><path d="M3.5 3.8 L14 14" stroke="#222" stroke-width="1.2"/><rect x="1.5" y="1.7" width="3.8" height="3.8" fill="#a9785e" stroke="#4a2a1a" stroke-width="1"/><rect x="12" y="12.2" width="4.4" height="4.4" fill="#a9785e" stroke="#4a2a1a" stroke-width="1"/></svg>
<svg style="left:28px;top:470px;" width="5" height="5" viewBox="0 0 5 5"><path d="M5 0 V5 H0 Z" fill="#111"/></svg>
<div style="left:10px;top:481px;width:23px;height:1px;background:#d6d6d6;"></div>
<svg style="left:12px;top:491px;" width="20" height="19" viewBox="0 0 20 19"><circle cx="3.8" cy="3.4" r="2.7" fill="#f0f0f0" stroke="#222" stroke-width="1.3"/><circle cx="6.8" cy="6.4" r="3.6" fill="#f0f0f0" stroke="#222" stroke-width="1.3"/><circle cx="11.2" cy="11.2" r="5.4" fill="#f0f0f0" stroke="#222" stroke-width="1.4"/></svg>
<svg style="left:28px;top:506.5px;" width="5" height="5" viewBox="0 0 5 5"><path d="M5 0 V5 H0 Z" fill="#111"/></svg>
<svg style="left:12.7px;top:521px;" width="17" height="17" viewBox="0 0 17 17"><rect x="0.5" y="0.5" width="16" height="16" fill="#fff" stroke="#222" stroke-width="1"/><rect x="1.0" y="1.0" width="3.75" height="3.75" fill="#222"/><rect x="1.0" y="8.5" width="3.75" height="3.75" fill="#222"/><rect x="4.75" y="4.75" width="3.75" height="3.75" fill="#222"/><rect x="4.75" y="12.25" width="3.75" height="3.75" fill="#222"/><rect x="8.5" y="1.0" width="3.75" height="3.75" fill="#222"/><rect x="8.5" y="8.5" width="3.75" height="3.75" fill="#222"/><rect x="12.25" y="4.75" width="3.75" height="3.75" fill="#222"/><rect x="12.25" y="12.25" width="3.75" height="3.75" fill="#222"/></svg>
<div style="left:10px;top:547px;width:23px;height:1px;background:#d6d6d6;"></div>
<svg style="left:12px;top:557px;" width="19" height="19" viewBox="0 0 19 19"><path d="M1.5 17 L2.4 14.2 L11 5.6 L12.9 7.5 L4.3 16.1 Z" fill="#4a3a3a" stroke="#2a2222" stroke-width="0.9"/><path d="M2 16.4 L10.6 7.6" stroke="#c2523c" stroke-width="0.9"/><path d="M9.6 4.8 L14 9.2" stroke="#222" stroke-width="2.2"/><path d="M11.8 6 L14.2 2.6 Q15.8 1.2 16.6 2.8 Q16.8 3.8 14 7.4 Z" fill="#222"/></svg>
<svg style="left:28px;top:572px;" width="5" height="5" viewBox="0 0 5 5"><path d="M5 0 V5 H0 Z" fill="#111"/></svg>
<svg style="left:12px;top:586px;" width="20" height="20" viewBox="0 0 20 20"><path d="M8.7 3 L15 9.4 L8.7 15.8 L2.3 9.4 Z" fill="#fff" stroke="#222" stroke-width="1.5"/><path d="M9 2.6 L15.6 9.2 L14.4 10.6 L8 3.8 Z" fill="#222"/><path d="M5 9.6 H12.4 L8.7 13.4 Z" fill="#d4143c"/><path d="M13.6 15.6 Q13.2 12.4 16.4 10.6 Q17.4 13.6 16.4 16.4 Z" fill="#d4143c"/></svg>
<svg style="left:28px;top:601px;" width="5" height="5" viewBox="0 0 5 5"><path d="M5 0 V5 H0 Z" fill="#111"/></svg>
<svg style="left:12px;top:615px;" width="19" height="18" viewBox="0 0 19 18"><path d="M8.5 0.8 L13.8 6 L8.5 11.2 L3.2 6 Z" fill="#fff" stroke="#222" stroke-width="1.4"/><path d="M6 6.2 H11 L8.5 8.8 Z" fill="#c9a27a"/><path d="M13 8 L15 11" stroke="#c7682a" stroke-width="1.4"/><rect x="1" y="13" width="16" height="3.4" fill="#fff" stroke="#333" stroke-width="1"/><rect x="8.5" y="13" width="8.5" height="3.4" fill="#d06a2a"/></svg>
<div style="left:10px;top:642px;width:23px;height:1px;background:#d6d6d6;"></div>
<svg style="left:11px;top:656px;" width="20" height="20" viewBox="0 0 20 20"><circle cx="10" cy="10" r="8.4" fill="#f4f4f4" stroke="#c9c9c9" stroke-width="1.3"/><path d="M10 4.8 V15.2 M4.8 10 H15.2" stroke="#c9c9c9" stroke-width="2"/></svg>
<div style="left:37px;top:96px;width:874px;height:18px;background:#ebebeb;"></div>
<div style="left:37px;top:96px;width:98px;height:18px;background:#dedede;"></div>
<div style="left:135px;top:96px;width:73px;height:10px;background:linear-gradient(90deg,#bfcde1,#b3c5dc);"></div>
<div style="left:208px;top:96px;width:20px;height:19px;background:#cfe2fb;"></div>
<div style="left:228px;top:96px;width:19px;height:19px;background:#d6d6d6;"></div>
<svg style="left:231px;top:100px;" width="12" height="12" viewBox="0 0 12 12"><path d="M6 0.5 V11.5 M0.5 6 H11.5" stroke="#b4b4b4" stroke-width="1.8"/></svg>
<svg style="left:40px;top:98px;" width="14" height="14" viewBox="0 0 14 14"><path d="M7 0.3 L0 6.8 V8 H1.8 V13.8 H5.6 V9.4 H8.4 V13.8 H12.2 V8 H14 V6.8 Z" fill="#222"/></svg>
<span class="cj" style="left:60px;top:99px;font-size:12px;color:#111;letter-spacing:0.2px">未命名</span>
<span style="left:100.5px;top:99px;font-size:12px;color:#111;letter-spacing:-0.6px">-1</span>
<div style="left:37px;top:114px;width:874px;height:1px;background:#6cc2d5;"></div>
<div style="left:37px;top:115px;width:874px;height:1px;background:#2a9fba;"></div>
<div style="left:37px;top:116px;width:874px;height:1px;background:#d5edf3;"></div>
<div style="left:135px;top:105px;width:73px;height:11.5px;background:linear-gradient(90deg,#9db4d1,#a6bcd8);"></div>
<div style="left:37px;top:117px;width:874px;height:16px;background:#f9f8f9;"></div>
<div style="left:37px;top:133px;width:17px;height:646px;background:#f8f7f8;"></div>
<div style="left:36px;top:96px;width:1px;height:704px;background:#d4d4d4;"></div>
<span style="left:87.6px;top:118px;width:40px;text-align:center;font-size:9.5px;color:#909090;">1000</span>
<span style="left:146.6px;top:118px;width:40px;text-align:center;font-size:9.5px;color:#909090;">800</span>
<span style="left:205.6px;top:118px;width:40px;text-align:center;font-size:9.5px;color:#909090;">600</span>
<span style="left:264.6px;top:118px;width:40px;text-align:center;font-size:9.5px;color:#909090;">400</span>
<span style="left:323.6px;top:118px;width:40px;text-align:center;font-size:9.5px;color:#909090;">200</span>
<span style="left:382.6px;top:118px;width:40px;text-align:center;font-size:9.5px;color:#909090;">0</span>
<span style="left:441.6px;top:118px;width:40px;text-align:center;font-size:9.5px;color:#909090;">200</span>
<span style="left:500.6px;top:118px;width:40px;text-align:center;font-size:9.5px;color:#909090;">400</span>
<span style="left:559.6px;top:118px;width:40px;text-align:center;font-size:9.5px;color:#909090;">600</span>
<span style="left:618.6px;top:118px;width:40px;text-align:center;font-size:9.5px;color:#909090;">800</span>
<span style="left:677.6px;top:118px;width:40px;text-align:center;font-size:9.5px;color:#909090;">1000</span>
<span style="left:736.6px;top:118px;width:40px;text-align:center;font-size:9.5px;color:#909090;">1200</span>
<span style="left:795.6px;top:118px;width:40px;text-align:center;font-size:9.5px;color:#909090;">1400</span>
<svg style="left:37px;top:116px;" width="874" height="17" viewBox="0 0 874 17"><rect x="23" y="15.4" width="1" height="1.6" fill="#a8a8a8"/><rect x="29" y="15.4" width="1" height="1.6" fill="#a8a8a8"/><rect x="35" y="15.4" width="1" height="1.6" fill="#a8a8a8"/><rect x="41" y="14" width="1" height="3" fill="#8a8a8a"/><rect x="46" y="15.4" width="1" height="1.6" fill="#a8a8a8"/><rect x="52" y="15.4" width="1" height="1.6" fill="#a8a8a8"/><rect x="58" y="15.4" width="1" height="1.6" fill="#a8a8a8"/><rect x="64" y="15.4" width="1" height="1.6" fill="#a8a8a8"/><rect x="70" y="11" width="1" height="6" fill="#5a5a5a"/><rect x="76" y="15.4" width="1" height="1.6" fill="#a8a8a8"/><rect x="82" y="15.4" width="1" height="1.6" fill="#a8a8a8"/><rect x="88" y="15.4" width="1" height="1.6" fill="#a8a8a8"/><rect x="94" y="15.4" width="1" height="1.6" fill="#a8a8a8"/><rect x="100" y="14" width="1" height="3" fill="#8a8a8a"/><rect x="106" y="15.4" width="1" height="1.6" fill="#a8a8a8"/><rect x="111" y="15.4" width="1" height="1.6" fill="#a8a8a8"/><rect x="117" y="15.4" width="1" height="1.6" fill="#a8a8a8"/><rect x="123" y="15.4" width="1" height="1.6" fill="#a8a8a8"/><rect x="129" y="11" width="1" height="6" fill="#5a5a5a"/><rect x="135" y="15.4" width="1" height="1.6" fill="#a8a8a8"/><rect x="141" y="15.4" width="1" height="1.6" fill="#a8a8a8"/><rect x="147" y="15.4" width="1" height="1.6" fill="#a8a8a8"/><rect x="153" y="15.4" width="1" height="1.6" fill="#a8a8a8"/><rect x="159" y="14" width="1" height="3" fill="#8a8a8a"/><rect x="164" y="15.4" width="1" height="1.6" fill="#a8a8a8"/><rect x="170" y="15.4" width="1" height="1.6" fill="#a8a8a8"/><rect x="176" y="15.4" width="1" height="1.6" fill="#a8a8a8"/><rect x="182" y="15.4" width="1" height="1.6" fill="#a8a8a8"/><rect x="188" y="11" width="1" height="6" fill="#5a5a5a"/><rect x="194" y="15.4" width="1" height="1.6" fill="#a8a8a8"/><rect x="200" y="15.4" width="1" height="1.6" fill="#a8a8a8"/><rect x="206" y="15.4" width="1" height="1.6" fill="#a8a8a8"/><rect x="212" y="15.4" width="1" height="1.6" fill="#a8a8a8"/><rect x="218" y="14" width="1" height="3" fill="#8a8a8a"/><rect x="224" y="15.4" width="1" height="1.6" fill="#a8a8a8"/><rect x="229" y="15.4" width="1" height="1.6" fill="#a8a8a8"/><rect x="235" y="15.4" width="1" height="1.6" fill="#a8a8a8"/><rect x="241" y="15.4" width="1" height="1.6" fill="#a8a8a8"/><rect x="247" y="11" width="1" height="6" fill="#5a5a5a"/><rect x="253" y="15.4" width="1" height="1.6" fill="#a8a8a8"/><rect x="259" y="15.4" width="1" height="1.6" fill="#a8a8a8"/><rect x="265" y="15.4" width="1" height="1.6" fill="#a8a8a8"/><rect x="271" y="15.4" width="1" height="1.6" fill="#a8a8a8"/><rect x="277" y="14" width="1" height="3" fill="#8a8a8a"/><rect x="282" y="15.4" width="1" height="1.6" fill="#a8a8a8"/><rect x="288" y="15.4" width="1" height="1.6" fill="#a8a8a8"/><rect x="294" y="15.4" width="1" height="1.6" fill="#a8a8a8"/><rect x="300" y="15.4" width="1" height="1.6" fill="#a8a8a8"/><rect x="306" y="11" width="1" height="6" fill="#5a5a5a"/><rect x="312" y="15.4" width="1" height="1.6" fill="#a8a8a8"/><rect x="318" y="15.4" width="1" height="1.6" fill="#a8a8a8"/><rect x="324" y="15.4" width="1" height="1.6" fill="#a8a8a8"/><rect x="330" y="15.4" width="1" height="1.6" fill="#a8a8a8"/><rect x="336" y="14" width="1" height="3" fill="#8a8a8a"/><rect x="342" y="15.4" width="1" height="1.6" fill="#a8a8a8"/><rect x="347" y="15.4" width="1" height="1.6" fill="#a8a8a8"/><rect x="353" y="15.4" width="1" height="1.6" fill="#a8a8a8"/><rect x="359" y="15.4" width="1" height="1.6" fill="#a8a8a8"/><rect x="365" y="11" width="1" height="6" fill="#5a5a5a"/><rect x="371" y="15.4" width="1" height="1.6" fill="#a8a8a8"/><rect x="377" y="15.4" width="1" height="1.6" fill="#a8a8a8"/><rect x="383" y="15.4" width="1" height="1.6" fill="#a8a8a8"/><rect x="389" y="15.4" width="1" height="1.6" fill="#a8a8a8"/><rect x="395" y="14" width="1" height="3" fill="#8a8a8a"/><rect x="400" y="15.4" width="1" height="1.6" fill="#a8a8a8"/><rect x="406" y="15.4" width="1" height="1.6" fill="#a8a8a8"/><rect x="412" y="15.4" width="1" height="1.6" fill="#a8a8a8"/><rect x="418" y="15.4" width="1" height="1.6" fill="#a8a8a8"/><rect x="424" y="11" width="1" height="6" fill="#5a5a5a"/><rect x="430" y="15.4" width="1" height="1.6" fill="#a8a8a8"/><rect x="436" y="15.4" width="1" height="1.6" fill="#a8a8a8"/><rect x="442" y="15.4" width="1" height="1.6" fill="#a8a8a8"/><rect x="448" y="15.4" width="1" height="1.6" fill="#a8a8a8"/><rect x="454" y="14" width="1" height="3" fill="#8a8a8a"/><rect x="460" y="15.4" width="1" height="1.6" fill="#a8a8a8"/><rect x="465" y="15.4" width="1" height="1.6" fill="#a8a8a8"/><rect x="471" y="15.4" width="1" height="1.6" fill="#a8a8a8"/><rect x="477" y="15.4" width="1" height="1.6" fill="#a8a8a8"/><rect x="483" y="11" width="1" height="6" fill="#5a5a5a"/><rect x="489" y="15.4" width="1" height="1.6" fill="#a8a8a8"/><rect x="495" y="15.4" width="1" height="1.6" fill="#a8a8a8"/><rect x="501" y="15.4" width="1" height="1.6" fill="#a8a8a8"/><rect x="507" y="15.4" width="1" height="1.6" fill="#a8a8a8"/><rect x="513" y="14" width="1" height="3" fill="#8a8a8a"/><rect x="518" y="15.4" width="1" height="1.6" fill="#a8a8a8"/><rect x="524" y="15.4" width="1" height="1.6" fill="#a8a8a8"/><rect x="530" y="15.4" width="1" height="1.6" fill="#a8a8a8"/><rect x="536" y="15.4" width="1" height="1.6" fill="#a8a8a8"/><rect x="542" y="11" width="1" height="6" fill="#5a5a5a"/><rect x="548" y="15.4" width="1" height="1.6" fill="#a8a8a8"/><rect x="554" y="15.4" width="1" height="1.6" fill="#a8a8a8"/><rect x="560" y="15.4" width="1" height="1.6" fill="#a8a8a8"/><rect x="566" y="15.4" width="1" height="1.6" fill="#a8a8a8"/><rect x="572" y="14" width="1" height="3" fill="#8a8a8a"/><rect x="578" y="15.4" width="1" height="1.6" fill="#a8a8a8"/><rect x="583" y="15.4" width="1" height="1.6" fill="#a8a8a8"/><rect x="589" y="15.4" width="1" height="1.6" fill="#a8a8a8"/><rect x="595" y="15.4" width="1" height="1.6" fill="#a8a8a8"/><rect x="601" y="11" width="1" height="6" fill="#5a5a5a"/><rect x="607" y="15.4" width="1" height="1.6" fill="#a8a8a8"/><rect x="613" y="15.4" width="1" height="1.6" fill="#a8a8a8"/><rect x="619" y="15.4" width="1" height="1.6" fill="#a8a8a8"/><rect x="625" y="15.4" width="1" height="1.6" fill="#a8a8a8"/><rect x="631" y="14" width="1" height="3" fill="#8a8a8a"/><rect x="636" y="15.4" width="1" height="1.6" fill="#a8a8a8"/><rect x="642" y="15.4" width="1" height="1.6" fill="#a8a8a8"/><rect x="648" y="15.4" width="1" height="1.6" fill="#a8a8a8"/><rect x="654" y="15.4" width="1" height="1.6" fill="#a8a8a8"/><rect x="660" y="11" width="1" height="6" fill="#5a5a5a"/><rect x="666" y="15.4" width="1" height="1.6" fill="#a8a8a8"/><rect x="672" y="15.4" width="1" height="1.6" fill="#a8a8a8"/><rect x="678" y="15.4" width="1" height="1.6" fill="#a8a8a8"/><rect x="684" y="15.4" width="1" height="1.6" fill="#a8a8a8"/><rect x="690" y="14" width="1" height="3" fill="#8a8a8a"/><rect x="696" y="15.4" width="1" height="1.6" fill="#a8a8a8"/><rect x="701" y="15.4" width="1" height="1.6" fill="#a8a8a8"/><rect x="707" y="15.4" width="1" height="1.6" fill="#a8a8a8"/><rect x="713" y="15.4" width="1" height="1.6" fill="#a8a8a8"/><rect x="719" y="11" width="1" height="6" fill="#5a5a5a"/><rect x="725" y="15.4" width="1" height="1.6" fill="#a8a8a8"/><rect x="731" y="15.4" width="1" height="1.6" fill="#a8a8a8"/><rect x="737" y="15.4" width="1" height="1.6" fill="#a8a8a8"/><rect x="743" y="15.4" width="1" height="1.6" fill="#a8a8a8"/><rect x="749" y="14" width="1" height="3" fill="#8a8a8a"/><rect x="754" y="15.4" width="1" height="1.6" fill="#a8a8a8"/><rect x="760" y="15.4" width="1" height="1.6" fill="#a8a8a8"/><rect x="766" y="15.4" width="1" height="1.6" fill="#a8a8a8"/><rect x="772" y="15.4" width="1" height="1.6" fill="#a8a8a8"/><rect x="778" y="11" width="1" height="6" fill="#5a5a5a"/><rect x="784" y="15.4" width="1" height="1.6" fill="#a8a8a8"/><rect x="790" y="15.4" width="1" height="1.6" fill="#a8a8a8"/><rect x="796" y="15.4" width="1" height="1.6" fill="#a8a8a8"/><rect x="802" y="15.4" width="1" height="1.6" fill="#a8a8a8"/><rect x="808" y="14" width="1" height="3" fill="#8a8a8a"/><rect x="814" y="15.4" width="1" height="1.6" fill="#a8a8a8"/><rect x="819" y="15.4" width="1" height="1.6" fill="#a8a8a8"/><rect x="825" y="15.4" width="1" height="1.6" fill="#a8a8a8"/><rect x="831" y="15.4" width="1" height="1.6" fill="#a8a8a8"/><rect x="837" y="11" width="1" height="6" fill="#5a5a5a"/><rect x="843" y="15.4" width="1" height="1.6" fill="#a8a8a8"/><rect x="849" y="15.4" width="1" height="1.6" fill="#a8a8a8"/><rect x="855" y="15.4" width="1" height="1.6" fill="#a8a8a8"/><rect x="861" y="15.4" width="1" height="1.6" fill="#a8a8a8"/><rect x="867" y="14" width="1" height="3" fill="#8a8a8a"/></svg>
<span class="cj" style="left:887px;top:118px;font-size:9.7px;color:#8a8a8a;">厘米</span>
<svg style="left:37px;top:133px;" width="17" height="646" viewBox="0 0 17 646"><rect x="15.4" y="7" width="1.6" height="1" fill="#a8a8a8"/><rect x="14" y="13" width="3" height="1" fill="#8a8a8a"/><rect x="15.4" y="19" width="1.6" height="1" fill="#a8a8a8"/><rect x="15.4" y="25" width="1.6" height="1" fill="#a8a8a8"/><rect x="15.4" y="31" width="1.6" height="1" fill="#a8a8a8"/><rect x="15.4" y="37" width="1.6" height="1" fill="#a8a8a8"/><rect x="11" y="42" width="6" height="1" fill="#5a5a5a"/><rect x="15.4" y="48" width="1.6" height="1" fill="#a8a8a8"/><rect x="15.4" y="54" width="1.6" height="1" fill="#a8a8a8"/><rect x="15.4" y="60" width="1.6" height="1" fill="#a8a8a8"/><rect x="15.4" y="66" width="1.6" height="1" fill="#a8a8a8"/><rect x="14" y="72" width="3" height="1" fill="#8a8a8a"/><rect x="15.4" y="78" width="1.6" height="1" fill="#a8a8a8"/><rect x="15.4" y="84" width="1.6" height="1" fill="#a8a8a8"/><rect x="15.4" y="90" width="1.6" height="1" fill="#a8a8a8"/><rect x="15.4" y="96" width="1.6" height="1" fill="#a8a8a8"/><rect x="11" y="102" width="6" height="1" fill="#5a5a5a"/><rect x="15.4" y="107" width="1.6" height="1" fill="#a8a8a8"/><rect x="15.4" y="113" width="1.6" height="1" fill="#a8a8a8"/><rect x="15.4" y="119" width="1.6" height="1" fill="#a8a8a8"/><rect x="15.4" y="125" width="1.6" height="1" fill="#a8a8a8"/><rect x="14" y="131" width="3" height="1" fill="#8a8a8a"/><rect x="15.4" y="137" width="1.6" height="1" fill="#a8a8a8"/><rect x="15.4" y="143" width="1.6" height="1" fill="#a8a8a8"/><rect x="15.4" y="149" width="1.6" height="1" fill="#a8a8a8"/><rect x="15.4" y="155" width="1.6" height="1" fill="#a8a8a8"/><rect x="11" y="160" width="6" height="1" fill="#5a5a5a"/><rect x="15.4" y="166" width="1.6" height="1" fill="#a8a8a8"/><rect x="15.4" y="172" width="1.6" height="1" fill="#a8a8a8"/><rect x="15.4" y="178" width="1.6" height="1" fill="#a8a8a8"/><rect x="15.4" y="184" width="1.6" height="1" fill="#a8a8a8"/><rect x="14" y="190" width="3" height="1" fill="#8a8a8a"/><rect x="15.4" y="196" width="1.6" height="1" fill="#a8a8a8"/><rect x="15.4" y="202" width="1.6" height="1" fill="#a8a8a8"/><rect x="15.4" y="208" width="1.6" height="1" fill="#a8a8a8"/><rect x="15.4" y="214" width="1.6" height="1" fill="#a8a8a8"/><rect x="11" y="220" width="6" height="1" fill="#5a5a5a"/><rect x="15.4" y="225" width="1.6" height="1" fill="#a8a8a8"/><rect x="15.4" y="231" width="1.6" height="1" fill="#a8a8a8"/><rect x="15.4" y="237" width="1.6" height="1" fill="#a8a8a8"/><rect x="15.4" y="243" width="1.6" height="1" fill="#a8a8a8"/><rect x="14" y="249" width="3" height="1" fill="#8a8a8a"/><rect x="15.4" y="255" width="1.6" height="1" fill="#a8a8a8"/><rect x="15.4" y="261" width="1.6" height="1" fill="#a8a8a8"/><rect x="15.4" y="267" width="1.6" height="1" fill="#a8a8a8"/><rect x="15.4" y="273" width="1.6" height="1" fill="#a8a8a8"/><rect x="11" y="278" width="6" height="1" fill="#5a5a5a"/><rect x="15.4" y="284" width="1.6" height="1" fill="#a8a8a8"/><rect x="15.4" y="290" width="1.6" height="1" fill="#a8a8a8"/><rect x="15.4" y="296" width="1.6" height="1" fill="#a8a8a8"/><rect x="15.4" y="302" width="1.6" height="1" fill="#a8a8a8"/><rect x="14" y="308" width="3" height="1" fill="#8a8a8a"/><rect x="15.4" y="314" width="1.6" height="1" fill="#a8a8a8"/><rect x="15.4" y="320" width="1.6" height="1" fill="#a8a8a8"/><rect x="15.4" y="326" width="1.6" height="1" fill="#a8a8a8"/><rect x="15.4" y="332" width="1.6" height="1" fill="#a8a8a8"/><rect x="11" y="338" width="6" height="1" fill="#5a5a5a"/><rect x="15.4" y="343" width="1.6" height="1" fill="#a8a8a8"/><rect x="15.4" y="349" width="1.6" height="1" fill="#a8a8a8"/><rect x="15.4" y="355" width="1.6" height="1" fill="#a8a8a8"/><rect x="15.4" y="361" width="1.6" height="1" fill="#a8a8a8"/><rect x="14" y="367" width="3" height="1" fill="#8a8a8a"/><rect x="15.4" y="373" width="1.6" height="1" fill="#a8a8a8"/><rect x="15.4" y="379" width="1.6" height="1" fill="#a8a8a8"/><rect x="15.4" y="385" width="1.6" height="1" fill="#a8a8a8"/><rect x="15.4" y="391" width="1.6" height="1" fill="#a8a8a8"/><rect x="11" y="396" width="6" height="1" fill="#5a5a5a"/><rect x="15.4" y="402" width="1.6" height="1" fill="#a8a8a8"/><rect x="15.4" y="408" width="1.6" height="1" fill="#a8a8a8"/><rect x="15.4" y="414" width="1.6" height="1" fill="#a8a8a8"/><rect x="15.4" y="420" width="1.6" height="1" fill="#a8a8a8"/><rect x="14" y="426" width="3" height="1" fill="#8a8a8a"/><rect x="15.4" y="432" width="1.6" height="1" fill="#a8a8a8"/><rect x="15.4" y="438" width="1.6" height="1" fill="#a8a8a8"/><rect x="15.4" y="444" width="1.6" height="1" fill="#a8a8a8"/><rect x="15.4" y="450" width="1.6" height="1" fill="#a8a8a8"/><rect x="11" y="456" width="6" height="1" fill="#5a5a5a"/><rect x="15.4" y="461" width="1.6" height="1" fill="#a8a8a8"/><rect x="15.4" y="467" width="1.6" height="1" fill="#a8a8a8"/><rect x="15.4" y="473" width="1.6" height="1" fill="#a8a8a8"/><rect x="15.4" y="479" width="1.6" height="1" fill="#a8a8a8"/><rect x="14" y="485" width="3" height="1" fill="#8a8a8a"/><rect x="15.4" y="491" width="1.6" height="1" fill="#a8a8a8"/><rect x="15.4" y="497" width="1.6" height="1" fill="#a8a8a8"/><rect x="15.4" y="503" width="1.6" height="1" fill="#a8a8a8"/><rect x="15.4" y="509" width="1.6" height="1" fill="#a8a8a8"/><rect x="11" y="514" width="6" height="1" fill="#5a5a5a"/><rect x="15.4" y="520" width="1.6" height="1" fill="#a8a8a8"/><rect x="15.4" y="526" width="1.6" height="1" fill="#a8a8a8"/><rect x="15.4" y="532" width="1.6" height="1" fill="#a8a8a8"/><rect x="15.4" y="538" width="1.6" height="1" fill="#a8a8a8"/><rect x="14" y="544" width="3" height="1" fill="#8a8a8a"/><rect x="15.4" y="550" width="1.6" height="1" fill="#a8a8a8"/><rect x="15.4" y="556" width="1.6" height="1" fill="#a8a8a8"/><rect x="15.4" y="562" width="1.6" height="1" fill="#a8a8a8"/><rect x="15.4" y="568" width="1.6" height="1" fill="#a8a8a8"/><rect x="11" y="574" width="6" height="1" fill="#5a5a5a"/><rect x="15.4" y="579" width="1.6" height="1" fill="#a8a8a8"/><rect x="15.4" y="585" width="1.6" height="1" fill="#a8a8a8"/><rect x="15.4" y="591" width="1.6" height="1" fill="#a8a8a8"/><rect x="15.4" y="597" width="1.6" height="1" fill="#a8a8a8"/><rect x="14" y="603" width="3" height="1" fill="#8a8a8a"/><rect x="15.4" y="609" width="1.6" height="1" fill="#a8a8a8"/><rect x="15.4" y="615" width="1.6" height="1" fill="#a8a8a8"/><rect x="15.4" y="621" width="1.6" height="1" fill="#a8a8a8"/><rect x="15.4" y="627" width="1.6" height="1" fill="#a8a8a8"/><rect x="11" y="632" width="6" height="1" fill="#5a5a5a"/><rect x="15.4" y="638" width="1.6" height="1" fill="#a8a8a8"/><rect x="15.4" y="644" width="1.6" height="1" fill="#a8a8a8"/></svg>
<span style="left:24.5px;top:169.5px;width:40px;height:10px;text-align:center;font-size:9.5px;color:#909090;transform:rotate(-90deg);">200</span>
<span style="left:24.5px;top:228.5px;width:40px;height:10px;text-align:center;font-size:9.5px;color:#909090;transform:rotate(-90deg);">400</span>
<span style="left:24.5px;top:287.5px;width:40px;height:10px;text-align:center;font-size:9.5px;color:#909090;transform:rotate(-90deg);">600</span>
<span style="left:24.5px;top:346.5px;width:40px;height:10px;text-align:center;font-size:9.5px;color:#909090;transform:rotate(-90deg);">800</span>
<span style="left:24.5px;top:405.5px;width:40px;height:10px;text-align:center;font-size:9.5px;color:#909090;transform:rotate(-90deg);">1000</span>
<span style="left:24.5px;top:464.5px;width:40px;height:10px;text-align:center;font-size:9.5px;color:#909090;transform:rotate(-90deg);">1200</span>
<span style="left:24.5px;top:523.5px;width:40px;height:10px;text-align:center;font-size:9.5px;color:#909090;transform:rotate(-90deg);">1400</span>
<span style="left:24.5px;top:582.5px;width:40px;height:10px;text-align:center;font-size:9.5px;color:#909090;transform:rotate(-90deg);">1600</span>
<span style="left:24.5px;top:641.5px;width:40px;height:10px;text-align:center;font-size:9.5px;color:#909090;transform:rotate(-90deg);">1800</span>
<span style="left:24.5px;top:700.5px;width:40px;height:10px;text-align:center;font-size:9.5px;color:#909090;transform:rotate(-90deg);">2000</span>
<svg style="left:39px;top:118px;" width="14" height="14" viewBox="0 0 14 14"><path d="M2 2 L12 12 M2 2 h4 M2 2 v4 M6 4.5 l2 -2 M3.5 7 l-1.5 1.5" stroke="#666" stroke-width="1" fill="none"/></svg>
<div style="left:54px;top:133px;width:839px;height:630px;background:#ffffff;"></div>
<div style="left:54px;top:133px;width:857px;height:1px;background:#5f5f5f;"></div>
<div style="left:54px;top:133px;width:1px;height:646px;background:#5f5f5f;"></div>
<div style="left:54px;top:762px;width:430px;height:1px;background:#5f5f5f;"></div>
<div style="left:655px;top:117px;width:1px;height:16px;background:transparent;border-left:1px dashed #222;"></div>
<div style="left:37px;top:397px;width:17px;height:1px;background:transparent;border-top:1px dashed #222;"></div>
<svg style="left:133.3px;top:262px;" width="677" height="276" viewBox="0 0 677 276"><g fill="#dc0c18"><rect x="0" y="0" width="676.5" height="6"/><rect x="0" y="10" width="676.5" height="6"/><rect x="0" y="20" width="676.5" height="6"/><rect x="0" y="30" width="676.5" height="6"/><rect x="0" y="40" width="676.5" height="6"/><rect x="0" y="50" width="676.5" height="6"/><rect x="0" y="60" width="676.5" height="6"/><rect x="0" y="70" width="676.5" height="6"/><rect x="0" y="80" width="676.5" height="6"/><rect x="0" y="90" width="676.5" height="6"/><rect x="0" y="100" width="676.5" height="6"/><rect x="0" y="110" width="676.5" height="6"/><rect x="0" y="120" width="676.5" height="6"/><rect x="0" y="130" width="676.5" height="6"/><rect x="0" y="140" width="676.5" height="6"/><rect x="0" y="150" width="676.5" height="6"/><rect x="0" y="160" width="676.5" height="6"/><rect x="0" y="170" width="676.5" height="6"/><rect x="0" y="180" width="676.5" height="6"/><rect x="0" y="190" width="676.5" height="6"/><rect x="0" y="200" width="676.5" height="6"/><rect x="0" y="210" width="676.5" height="6"/><rect x="0" y="220" width="676.5" height="6"/><rect x="0" y="230" width="676.5" height="6"/><rect x="0" y="240" width="676.5" height="6"/><rect x="0" y="250" width="676.5" height="6"/><rect x="0" y="260" width="676.5" height="6"/><rect x="0" y="270" width="676.5" height="6"/></g></svg>
<div style="left:101px;top:429px;width:721px;height:145px;background:transparent;border:1px solid #1a1a1a;"></div>
<div style="left:91px;top:251px;width:8px;height:8px;background:#000;"></div>
<div style="left:457px;top:251px;width:8px;height:8px;background:#000;"></div>
<div style="left:823px;top:251px;width:8px;height:8px;background:#000;"></div>
<div style="left:91px;top:413px;width:8px;height:8px;background:#000;"></div>
<div style="left:823px;top:413px;width:8px;height:8px;background:#000;"></div>
<div style="left:91px;top:575px;width:8px;height:8px;background:#000;"></div>
<div style="left:457px;top:575px;width:8px;height:8px;background:#000;"></div>
<div style="left:823px;top:575px;width:8px;height:8px;background:#000;"></div>
<div style="left:130px;top:268px;width:6px;height:6px;background:#fff;border:1px solid #000;"></div>
<div style="left:130px;top:518px;width:6px;height:6px;background:#fff;border:1px solid #000;"></div>
<div style="left:131px;top:529px;width:4px;height:4px;background:#fff;border:1px solid #000;"></div>
<svg style="left:456px;top:412px;" width="10" height="10" viewBox="0 0 10 10"><defs><clipPath id="xa"><rect x="0" y="0" width="10" height="6"/></clipPath><clipPath id="xb"><rect x="0" y="6" width="10" height="4"/></clipPath></defs><g clip-path="url(#xa)"><path d="M2 2 L8 8 M8 2 L2 8" stroke="#86f0b4" stroke-width="1.9"/></g><g clip-path="url(#xb)"><path d="M2 2 L8 8 M8 2 L2 8" stroke="#000" stroke-width="1.9"/></g></svg>
<svg style="left:648px;top:388px;" width="44" height="16" viewBox="0 0 44 16"><defs><clipPath id="cw"><rect x="0" y="10" width="44" height="4"/><rect x="0" y="0" width="44" height="4"/></clipPath><clipPath id="cr"><rect x="0" y="4" width="44" height="6"/></clipPath></defs><g clip-path="url(#cr)"><path d="M3 10 V7 Q3 3.6 7 3.6 Q11 3.6 11 7 V10" fill="none" stroke="#46d0a8" stroke-width="1.6"/><path d="M5.4 5.4 H8.6" stroke="#e8f8f0" stroke-width="1.2"/></g><g clip-path="url(#cw)"><path d="M2.8 9 V13.3 H11.2 V9" fill="none" stroke="#111" stroke-width="1.5"/></g><g transform="translate(21.5 2.6)"><text x="0" y="8.9" font-size="9.5" font-weight="bold" fill="#3ccf44" font-family="'Liberation Sans','Noto Sans CJK SC',sans-serif">边缘</text></g><path d="M21 12.2 Q26 10.6 30 11.6 T39.5 11.4" fill="none" stroke="#1a2a9a" stroke-width="1.3"/><path d="M31 4.6 l2 1.4 M36 4.2 l1.6 1.2" stroke="#e8b030" stroke-width="1.1"/></svg>
<svg style="left:817px;top:569px;" width="7" height="7" viewBox="0 0 7 7"><path d="M1 6 L6 1" stroke="#000" stroke-width="2"/><path d="M2 5.5 L5.5 2" stroke="#fff" stroke-width="0.8"/></svg>
<svg style="left:620px;top:100px;" width="26" height="110" viewBox="0 0 26 110"><path d="M12.8 3.4 L20.8 18.8 L17 18.2 L13 106.5 H12.2 L8.6 18.2 L4.8 18.8 Z" fill="#ee3030"/></svg>
<div style="left:893px;top:134px;width:19px;height:645px;background:#ffffff;"></div>
<div style="left:894px;top:135px;width:16px;height:15px;background:#f1f1f1;"></div>
<svg style="left:899px;top:141px;" width="7" height="4" viewBox="0 0 7 4"><path d="M0 4 L3.5 0.2 L7 4 Z" fill="#222"/></svg>
<div style="left:894px;top:189px;width:15px;height:554px;background:linear-gradient(90deg,#e4e4e4 0%,#f3f3f3 35%,#e6e6e6 60%,#c2c2c2 100%);border:1px solid #9c9c9c;"></div>
<div style="left:898px;top:462px;width:6px;height:1px;background:#5a5a5a;"></div>
<div style="left:898px;top:465px;width:6px;height:1px;background:#5a5a5a;"></div>
<div style="left:898px;top:468px;width:6px;height:1px;background:#5a5a5a;"></div>
<div style="left:884px;top:716px;width:14px;height:34px;background:#fff;border-radius:6px;"></div>
<svg style="left:901px;top:752px;" width="5" height="4" viewBox="0 0 5 4"><path d="M0 0 H5 L2.5 3.6 Z" fill="#555"/></svg>
<div style="left:911px;top:96px;width:43px;height:704px;background:#ededed;"></div>
<div style="left:912px;top:96px;width:1px;height:704px;background:#d4d4d4;"></div>
<div style="left:913px;top:96px;width:2px;height:704px;background:#fbfbfb;"></div>
<div style="left:934px;top:96px;width:5px;height:704px;background:#fbfbfb;"></div>
<div style="left:936px;top:96px;width:1px;height:704px;background:#d6d6d6;"></div>
<div style="left:915px;top:96px;width:19px;height:704px;background:#ececec;"></div>
<svg style="left:920px;top:100.5px;" width="9" height="9" viewBox="0 0 9 9"><path d="M1 1 L8 8 M8 1 L1 8" stroke="#b4b4b4" stroke-width="1.4"/></svg>
<div style="left:915px;top:115px;width:19px;height:103px;background:#b3b3b3;"></div>
<svg style="left:919px;top:121px;" width="14" height="11" viewBox="0 0 14 11"><rect x="0.6" y="1.2" width="12" height="3.6" fill="#c4c8c8" stroke="#333" stroke-width="1.1"/><rect x="0.6" y="6.6" width="8.6" height="3.4" fill="#c4c8c8" stroke="#333" stroke-width="1.1"/></svg>
<svg style="left:916.5px;top:138.5px;" width="14.6" height="62.0" viewBox="0 0 14.6 62.0"><g transform="translate(14.6 0) rotate(90)"><text x="0.3" y="10.6" font-size="12" fill="#111" font-family="'Liberation Sans','Noto Sans CJK SC',sans-serif">对齐与分布</text></g></svg>
<svg style="left:915px;top:234px;" width="20" height="20" viewBox="0 0 20 20"><circle cx="10" cy="10" r="8.2" fill="#f4f4f4" stroke="#c4c4c4" stroke-width="1.3"/><path d="M10 4.8 V15.2 M4.8 10 H15.2" stroke="#c4c4c4" stroke-width="2"/></svg>
<div style="left:939px;top:96px;width:15px;height:704px;background:#ececec;"></div>
<svg style="left:944px;top:100.5px;" width="9" height="9" viewBox="0 0 9 9"><path d="M1 1 L8 8 M8 1 L1 8" stroke="#b4b4b4" stroke-width="1.4"/></svg>
<div style="left:939px;top:115px;width:15px;height:79px;background:#e2e2e2;"></div>
<svg style="left:941px;top:119px;" width="13" height="15" viewBox="0 0 13 15"><path d="M0.3 2.6 H13" stroke="#222" stroke-width="1.4" stroke-dasharray="3.2 2"/><path d="M2.7 0 V15" stroke="#222" stroke-width="1.4" stroke-dasharray="3.4 2.2"/></svg>
<svg style="left:940.5px;top:139px;" width="14.6" height="37.6" viewBox="0 0 14.6 37.6"><g transform="translate(14.6 0) rotate(90)"><text x="0.3" y="10.6" font-size="12" fill="#111" font-family="'Liberation Sans','Noto Sans CJK SC',sans-serif">辅助线</text></g></svg>
<div style="left:939px;top:194px;width:15px;height:150px;background:#b3b3b3;"></div>
<svg style="left:940px;top:198px;" width="14" height="17" viewBox="0 0 14 17"><path d="M14 1.4 H1.3 V15.3 H14" fill="#bcbcbc" stroke="#333" stroke-width="1.1"/><path d="M1.6 8.5 Q2.4 2.6 8.4 1.6" fill="none" stroke="#444" stroke-width="1.1"/><path d="M4 10 L12 3" stroke="#c9c9c9" stroke-width="1"/></svg>
<svg style="left:940.5px;top:219.5px;" width="14.8" height="109.0" viewBox="0 0 14.8 109.0"><g transform="translate(14.8 0) rotate(90)"><text x="0.5" y="10.7" font-size="11.8" fill="#111" textLength="106.5" lengthAdjust="spacing" font-family="'Liberation Sans','Noto Sans CJK SC',sans-serif">圆角/扇形角/倒棱角</text></g></svg>
<svg style="left:938px;top:360px;" width="20" height="20" viewBox="0 0 20 20"><circle cx="10" cy="10" r="8.2" fill="#f4f4f4" stroke="#c4c4c4" stroke-width="1.3"/><path d="M10 4.8 V15.2 M4.8 10 H15.2" stroke="#c4c4c4" stroke-width="2"/></svg>
<div style="left:55px;top:763px;width:428px;height:16px;background:#f3f3f3;"></div>
<div style="left:37px;top:779px;width:876px;height:1px;background:#dadada;"></div>
<svg style="left:58px;top:766px;" width="10" height="10" viewBox="0 0 10 10"><path d="M3 0.6 H9.4 V9.4 H0.6 V3 Z" fill="#fafafa" stroke="#6a6a6a" stroke-width="0.9"/><path d="M0.6 3 H3 V0.6" fill="none" stroke="#6a6a6a" stroke-width="0.8"/><path d="M5.2 4 V8 M3.2 6 H7.2" stroke="#6a6a6a" stroke-width="0.9"/></svg>
<svg style="left:74px;top:766px;" width="10" height="10" viewBox="0 0 10 10"><rect x="0" y="0" width="1.6" height="10" fill="#a9a9a9"/><path d="M10 0 V10 L2.6 5 Z" fill="#a9a9a9"/></svg>
<svg style="left:91px;top:766px;" width="8" height="10" viewBox="0 0 8 10"><path d="M7.5 0 V10 L0.4 5 Z" fill="#a9a9a9"/></svg>
<span style="left:104.5px;top:763.5px;font-size:13.5px;color:#111;">1</span>
<span class="cj" style="left:117.8px;top:764px;font-size:12px;color:#111;">的</span>
<span style="left:134.5px;top:763.5px;font-size:13.5px;color:#111;">1</span>
<svg style="left:150px;top:766px;" width="8" height="10" viewBox="0 0 8 10"><path d="M0.5 0 V10 L7.6 5 Z" fill="#a9a9a9"/></svg>
<svg style="left:165px;top:766px;" width="10" height="10" viewBox="0 0 10 10"><rect x="8.4" y="0" width="1.6" height="10" fill="#a9a9a9"/><path d="M0 0 V10 L7.4 5 Z" fill="#a9a9a9"/></svg>
<svg style="left:181px;top:766px;" width="10" height="10" viewBox="0 0 10 10"><path d="M3 0.6 H9.4 V9.4 H0.6 V3 Z" fill="#fafafa" stroke="#6a6a6a" stroke-width="0.9"/><path d="M0.6 3 H3 V0.6" fill="none" stroke="#6a6a6a" stroke-width="0.8"/><path d="M5.2 4 V8 M3.2 6 H7.2" stroke="#6a6a6a" stroke-width="0.9"/></svg>
<svg style="left:200px;top:762px;" width="52" height="18" viewBox="0 0 52 18"><path d="M0 0.5 H2 L8.5 16.5 H43 L49 0.5 H52" fill="#fff" stroke="#333" stroke-width="1"/><rect x="2.6" y="0" width="45.8" height="1.2" fill="#fff"/></svg>
<span class="cj" style="left:213.8px;top:764px;font-size:12px;color:#111;">页</span>
<span style="left:227.0px;top:763.5px;font-size:13.5px;color:#111;">1</span>
<div style="left:483px;top:763px;width:3px;height:16px;background:#e2e2e2;border-left:1px dotted #aaa;border-right:1px dotted #aaa;"></div>
<div style="left:486px;top:763px;width:15px;height:16px;background:#e9e9e9;border:1px solid #d4d4d4;"></div>
<svg style="left:490.5px;top:768px;" width="5" height="7" viewBox="0 0 5 7"><path d="M4.5 0 V7 L0.5 3.5 Z" fill="#444"/></svg>
<div style="left:501px;top:762px;width:410px;height:17px;background:#fff;"></div>
<div style="left:527px;top:764px;width:374px;height:14px;background:linear-gradient(180deg,#f4f4f4 0%,#e9e9e9 40%,#c4c4c4 100%);border:1px solid #9f9f9f;border-radius:2px;"></div>
<div style="left:694px;top:767px;width:1px;height:7px;background:#555;"></div>
<div style="left:697px;top:767px;width:1px;height:7px;background:#555;"></div>
<div style="left:700px;top:767px;width:1px;height:7px;background:#555;"></div>
<div style="left:797px;top:767px;width:1px;height:7px;background:#555;"></div>
<div style="left:800px;top:767px;width:1px;height:7px;background:#555;"></div>
<div style="left:803px;top:767px;width:1px;height:7px;background:#555;"></div>
<svg style="left:899px;top:765px;" width="10" height="12" viewBox="0 0 10 12"><circle cx="4" cy="4.5" r="3" fill="#fff" stroke="#444" stroke-width="1.1"/><path d="M6 7 L9 11" stroke="#333" stroke-width="1.6"/></svg>
<div style="left:37px;top:780px;width:876px;height:20px;background:#f0f0f0;"></div>
<div style="left:40px;top:783px;width:1px;height:1px;background:#b5b5b5;"></div>
<div style="left:40px;top:786px;width:1px;height:1px;background:#b5b5b5;"></div>
<div style="left:40px;top:789px;width:1px;height:1px;background:#b5b5b5;"></div>
<div style="left:40px;top:792px;width:1px;height:1px;background:#b5b5b5;"></div>
<div style="left:40px;top:795px;width:1px;height:1px;background:#b5b5b5;"></div>
<div style="left:40px;top:798px;width:1px;height:1px;background:#b5b5b5;"></div>
<div style="left:43px;top:783px;width:1px;height:1px;background:#b5b5b5;"></div>
<div style="left:43px;top:786px;width:1px;height:1px;background:#b5b5b5;"></div>
<div style="left:43px;top:789px;width:1px;height:1px;background:#b5b5b5;"></div>
<div style="left:43px;top:792px;width:1px;height:1px;background:#b5b5b5;"></div>
<div style="left:43px;top:795px;width:1px;height:1px;background:#b5b5b5;"></div>
<div style="left:43px;top:798px;width:1px;height:1px;background:#b5b5b5;"></div>
<svg style="left:52px;top:786.5px;" width="5" height="8" viewBox="0 0 5 8"><path d="M0.3 0 V8 L4.3 4 Z" fill="#111"/></svg>
<svg style="left:67px;top:783px;" width="14" height="14" viewBox="0 0 14 14"><path d="M1 13 L2 10.3 L8 4.3 L9.8 6.1 L3.8 12.1 Z" fill="#444" stroke="#333" stroke-width="0.6"/><path d="M7 3.2 L11 7.2" stroke="#333" stroke-width="1.8"/><path d="M9 4.5 L11 2 Q12.6 0.8 13.1 2.2 Q13.2 3 10.8 6 Z" fill="#333"/></svg>
<svg style="left:88px;top:785px;" width="8" height="11" viewBox="0 0 8 11"><path d="M7 0.8 L1.5 5.5 L7 10.2" fill="none" stroke="#cdcdcd" stroke-width="1.8"/></svg>
<div style="left:101px;top:782px;width:17px;height:17px;background:#fff;border:1px solid #222;"></div>
<svg style="left:102px;top:783px;" width="15" height="15" viewBox="0 0 15 15"><path d="M0 0 L15 15 M15 0 L0 15" stroke="#222" stroke-width="1"/></svg>
<div style="left:118px;top:782px;width:17px;height:17px;background:#e0101c;border-right:1px solid rgba(255,255,255,.18);"></div>
<div style="left:135px;top:782px;width:17px;height:17px;background:#3e4a4a;border-right:1px solid rgba(255,255,255,.18);"></div>
<div style="left:152px;top:782px;width:17px;height:17px;background:#7a7675;border-right:1px solid rgba(255,255,255,.18);"></div>
<div style="left:169px;top:782px;width:17px;height:17px;background:#706c6b;border-right:1px solid rgba(255,255,255,.18);"></div>
<div style="left:186px;top:782px;width:17px;height:17px;background:#a9a5a4;border-right:1px solid rgba(255,255,255,.18);"></div>
<div style="left:203px;top:782px;width:17px;height:17px;background:#a3a1a0;border-right:1px solid rgba(255,255,255,.18);"></div>
<div style="left:220px;top:782px;width:17px;height:17px;background:#8f8d8c;border-right:1px solid rgba(255,255,255,.18);"></div>
<div style="left:237px;top:782px;width:17px;height:17px;background:#7d7b7a;border-right:1px solid rgba(255,255,255,.18);"></div>
<div style="left:254px;top:782px;width:17px;height:17px;background:#8a8887;border-right:1px solid rgba(255,255,255,.18);"></div>
<div style="left:271px;top:782px;width:17px;height:17px;background:#807e7d;border-right:1px solid rgba(255,255,255,.18);"></div>
<div style="left:288px;top:782px;width:17px;height:17px;background:#6e6c6b;border-right:1px solid rgba(255,255,255,.18);"></div>
<div style="left:305px;top:782px;width:17px;height:17px;background:#050505;border-right:1px solid rgba(255,255,255,.18);"></div>
<div style="left:322px;top:782px;width:17px;height:17px;background:#5f5d5c;border-right:1px solid rgba(255,255,255,.18);"></div>
<div style="left:339px;top:782px;width:17px;height:17px;background:#777777;border-right:1px solid rgba(255,255,255,.18);"></div>
<div style="left:356px;top:782px;width:17px;height:17px;background:#6a6a6a;border-right:1px solid rgba(255,255,255,.18);"></div>
<div style="left:373px;top:782px;width:17px;height:17px;background:#999999;border-right:1px solid rgba(255,255,255,.18);"></div>
<div style="left:390px;top:782px;width:17px;height:17px;background:#888888;border-right:1px solid rgba(255,255,255,.18);"></div>
<div style="left:407px;top:782px;width:17px;height:17px;background:#e8e8e8;border-right:1px solid rgba(255,255,255,.18);"></div>
<div style="left:424px;top:782px;width:17px;height:17px;background:#d0d0d0;border-right:1px solid rgba(255,255,255,.18);"></div>
<div style="left:441px;top:782px;width:17px;height:17px;background:#ffe91a;border-right:1px solid rgba(255,255,255,.18);"></div>
<div style="left:458px;top:782px;width:17px;height:17px;background:#e21a23;border-right:1px solid rgba(255,255,255,.18);"></div>
<div style="left:475px;top:782px;width:17px;height:17px;background:#2a1a18;border-right:1px solid rgba(255,255,255,.18);"></div>
<div style="left:492px;top:782px;width:17px;height:17px;background:#ffffff;border:1px solid #c9c9c9;"></div>
<div style="left:509px;top:782px;width:17px;height:17px;background:#ffe91a;border-right:1px solid rgba(255,255,255,.18);"></div>
<div style="left:526px;top:782px;width:17px;height:17px;background:#1d2088;border-right:1px solid rgba(255,255,255,.18);"></div>
<div style="left:543px;top:782px;width:17px;height:17px;background:#f08519;border-right:1px solid rgba(255,255,255,.18);"></div>
<div style="left:560px;top:782px;width:17px;height:17px;background:#009944;border-right:1px solid rgba(255,255,255,.18);"></div>
<div style="left:577px;top:782px;width:17px;height:17px;background:#00a0e9;border-right:1px solid rgba(255,255,255,.18);"></div>
<div style="left:5px;top:800px;width:949px;height:1px;background:#dcdcdc;"></div>
<div style="left:5px;top:801px;width:949px;height:7px;background:#f3f3f3;"></div>
<div style="left:0px;top:0px;width:1px;height:808px;background:#a6a6a6;"></div>
<div style="left:1px;top:0px;width:4px;height:808px;background:#ffffff;"></div>
<div style="left:0;top:778px;width:11px;height:30px;background:#3d4053;border-radius:4px 4px 0 0;"></div>
<div style="left:2px;top:783px;width:7px;height:1px;background:#5b5f75;"></div>
<div style="left:2px;top:786px;width:7px;height:1px;background:#5b5f75;"></div>
<div style="left:2px;top:789px;width:7px;height:1px;background:#5b5f75;"></div>
<div style="left:2px;top:792px;width:7px;height:1px;background:#5b5f75;"></div>
<div style="left:2px;top:795px;width:7px;height:1px;background:#5b5f75;"></div>
<div style="left:2px;top:798px;width:7px;height:1px;background:#5b5f75;"></div>
<div style="left:2px;top:801px;width:7px;height:1px;background:#5b5f75;"></div>
<div style="left:2px;top:804px;width:7px;height:1px;background:#5b5f75;"></div>
<div style="left:2px;top:807px;width:7px;height:1px;background:#5b5f75;"></div>
</div></body></html>
